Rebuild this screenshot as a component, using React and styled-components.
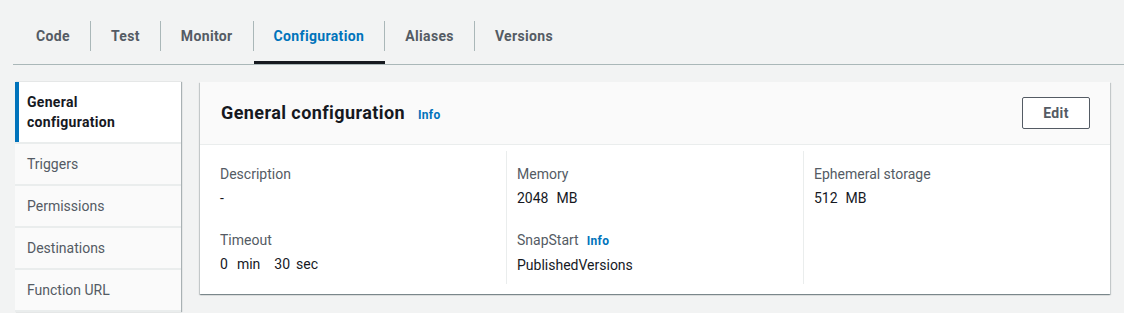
import React from "react";
import styled, { createGlobalStyle } from "styled-components";

const Global = createGlobalStyle`
  html, body { margin: 0; padding: 0; background: #f2f3f3; }
  body { font-family: Roboto, "Noto Sans", Arial, sans-serif; font-size: 14px; color: #16191f; }
  * { box-sizing: border-box; }
`;

const Page = styled.div`
  background: #f2f3f3;
  height: 313px;
  overflow: hidden;
`;

const TabBar = styled.div`
  display: flex;
  margin-left: 13px;
  padding: 21px 0 0 3px;
  border-bottom: 1px solid #aab7b8;
`;

const Tab = styled.div`
  position: relative;
  padding-bottom: 13px;
  &::after {
    content: "";
    display: ${(p) => (p.$active ? "block" : "none")};
    position: absolute;
    left: 1px;
    right: -1px;
    bottom: 0;
    height: 3px;
    background: #16191f;
  }
`;

const TabLabel = styled.span`
  display: block;
  line-height: 30px;
  padding: 0 20px;
  font-weight: 700;
  font-size: 14px;
  letter-spacing: 0.35px;
  color: ${(p) => (p.$active ? "#0073bb" : "#545b64")};
  border-left: ${(p) => (p.$first ? "none" : "1px solid #aab7b8")};
`;

const Content = styled.div`
  display: flex;
  align-items: flex-start;
  gap: 19px;
  padding: 17px 14px 0 15px;
`;

const Nav = styled.nav`
  width: 166px;
  flex: none;
  display: flex;
  flex-direction: column;
  gap: 2px;
  padding-bottom: 2px;
  background: #eaeded;
  box-shadow: 1px 0 1px 0 rgba(0, 28, 36, 0.3);
`;

const NavItem = styled.div`
  padding: 10px 12px;
  min-height: 40px;
  line-height: 20px;
  font-size: 14px;
  background: ${(p) => (p.$active ? "#ffffff" : "#fafafa")};
  color: ${(p) => (p.$active ? "#16191f" : "#545b64")};
  font-weight: ${(p) => (p.$active ? 700 : 400)};
  letter-spacing: ${(p) => (p.$active ? "0.3px" : "0")};
  box-shadow: ${(p) => (p.$active ? "inset 4px 0 0 #0073bb" : "none")};
`;

const Panel = styled.section`
  flex: 1;
  background: #ffffff;
  box-shadow: 0 1px 1px 0 rgba(0, 28, 36, 0.3), 1px 1px 1px 0 rgba(0, 28, 36, 0.15),
    -1px 1px 1px 0 rgba(0, 28, 36, 0.15);
`;

const PanelHeader = styled.header`
  display: flex;
  align-items: center;
  justify-content: space-between;
  padding: 15px 20px;
  background: #fafafa;
  border-bottom: 1px solid #eaeded;
`;

const TitleRow = styled.div`
  display: flex;
  align-items: baseline;
  gap: 13px;
`;

const Title = styled.h2`
  margin: 0 0 0 1px;
  font-size: 18px;
  line-height: 22px;
  font-weight: 700;
  letter-spacing: 0.42px;
  color: #16191f;
`;

const InfoLink = styled.a`
  font-size: 12px;
  font-weight: 700;
  letter-spacing: 0.3px;
  color: #0073bb;
  text-decoration: none;
`;

const Button = styled.button`
  font-family: inherit;
  font-size: 14px;
  font-weight: 700;
  letter-spacing: 0.35px;
  line-height: 22px;
  height: 32px;
  width: 68px;
  padding: 4px 0;
  color: #545b64;
  background: #ffffff;
  border: 1px solid #545b64;
  border-radius: 2px;
`;

const PanelBody = styled.div`
  display: grid;
  grid-template-columns: repeat(3, 1fr);
  column-gap: 21px;
  padding: 6px 20px 10px;
`;

const Column = styled.div`
  position: relative;
  display: flex;
  flex-direction: column;
  gap: 20px;
  padding: 12px 0 8px;
  &::before {
    content: "";
    display: ${(p) => (p.$divider ? "block" : "none")};
    position: absolute;
    left: -11px;
    top: 0;
    bottom: 0;
    width: 1px;
    background: #eaeded;
  }
`;

const Field = styled.div`
  display: flex;
  flex-direction: column;
  gap: 2px;
`;

const Label = styled.div`
  display: flex;
  align-items: baseline;
  gap: 8px;
  font-size: 14px;
  line-height: 22px;
  color: #545b64;
`;

const Value = styled.div`
  font-size: 14px;
  line-height: 22px;
  color: #16191f;
`;

const Unit = styled.span`
  margin-left: ${(p) => p.$gap || 4}px;
`;

const tabs = ["Code", "Test", "Monitor", "Configuration", "Aliases", "Versions"];
const navItems = ["Triggers", "Permissions", "Destinations", "Function URL"];

export default function App() {
  return (
    <Page>
      <Global />
      <TabBar>
        {tabs.map((t, i) => (
          <Tab key={t} $active={t === "Configuration"}>
            <TabLabel $first={i === 0} $active={t === "Configuration"}>
              {t}
            </TabLabel>
          </Tab>
        ))}
      </TabBar>
      <Content>
        <Nav>
          <NavItem $active>
            General
            <br />
            configuration
          </NavItem>
          {navItems.map((n) => (
            <NavItem key={n}>{n}</NavItem>
          ))}
        </Nav>
        <Panel>
          <PanelHeader>
            <TitleRow>
              <Title>General configuration</Title>
              <InfoLink href="#">Info</InfoLink>
            </TitleRow>
            <Button>Edit</Button>
          </PanelHeader>
          <PanelBody>
            <Column>
              <Field>
                <Label>Description</Label>
                <Value>-</Value>
              </Field>
              <Field>
                <Label>Timeout</Label>
                <Value>
                  0<Unit $gap={9}>min</Unit>
                  <Unit $gap={14}>30</Unit>
                  <Unit $gap={6}>sec</Unit>
                </Value>
              </Field>
            </Column>
            <Column $divider>
              <Field>
                <Label>Memory</Label>
                <Value>
                  2048<Unit $gap={8}>MB</Unit>
                </Value>
              </Field>
              <Field>
                <Label>
                  SnapStart <InfoLink href="#">Info</InfoLink>
                </Label>
                <Value>PublishedVersions</Value>
              </Field>
            </Column>
            <Column $divider>
              <Field>
                <Label>Ephemeral storage</Label>
                <Value>
                  512<Unit $gap={8}>MB</Unit>
                </Value>
              </Field>
            </Column>
          </PanelBody>
        </Panel>
      </Content>
    </Page>
  );
}
